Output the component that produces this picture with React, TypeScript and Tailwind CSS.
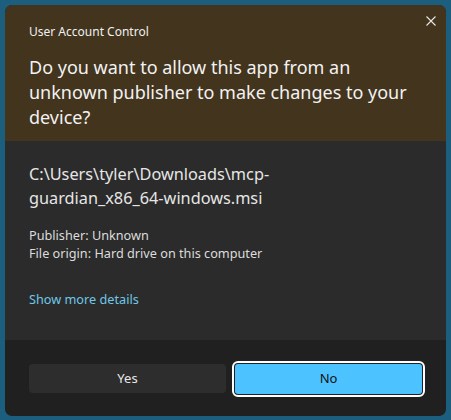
import React from "react";

const font = { fontFamily: '"Noto Sans", "Open Sans", sans-serif' };

export default function App() {
  return (
    <div
      className="w-[451px] h-[420px] bg-[#1b5e7e] pt-[5px] pl-[5px] pr-[5px] pb-[4px]"
      style={font}
    >
      <div className="flex h-full flex-col overflow-hidden rounded-[7px] bg-[#202020]">
        {/* header */}
        <div className="relative h-[136px] bg-[#43341e] px-[24px] pt-[19px] text-white">
          <div className="text-[12px] leading-[16px] text-[#f0f0f0]">User Account Control</div>
          <button className="absolute right-[3px] top-[4px] flex h-[24px] w-[24px] items-center justify-center text-[#e8e8e8]">
            <svg width="10" height="10" viewBox="0 0 10 10" fill="none">
              <path d="M0.5 0.5L9.5 9.5M9.5 0.5L0.5 9.5" stroke="currentColor" strokeWidth="1.1" />
            </svg>
          </button>
          <h1 className="mt-[15px] text-[18px] leading-[25px] font-normal text-[#f2f2f2]">
            Do you want to allow this app from an unknown publisher to make changes to your device?
          </h1>
        </div>

        {/* body */}
        <div className="h-[199px] bg-[#2b2b2b] px-[24px] pt-[21px] text-[#e6e6e6]">
          <div className="w-[300px] break-words text-[16.3px] leading-[24px]">
            C:\Users\tyler\Downloads\mcp-guardian_x86_64-windows.msi
          </div>
          <div className="mt-[16px] text-[12.7px] leading-[18px] text-[#dcdcdc]">
            <div>Publisher: Unknown</div>
            <div>File origin: Hard drive on this computer</div>
          </div>
          <div className="mt-[28px] text-[12.7px] leading-[18px] text-[#6fc8e8]">Show more details</div>
        </div>

        {/* footer */}
        <div className="flex flex-1 items-start gap-[6px] pl-[24px] pr-[21px] pt-[24px]">
          <button className="h-[29px] w-[197px] shrink-0 rounded-[4px] bg-[#2d2d2d] text-[13px] text-[#e8e8e8]">
            Yes
          </button>
          <div className="-mt-[3px] shrink-0 rounded-[6px] border-2 border-white p-[1px]">
            <button className="block h-[30px] w-[187px] rounded-[3px] bg-[#4cc2ff] text-[13px] text-[#111]">
              No
            </button>
          </div>
        </div>
      </div>
    </div>
  );
}
